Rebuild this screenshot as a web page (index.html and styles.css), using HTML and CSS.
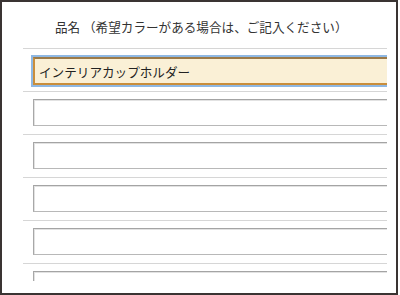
FILE: index.html
```html
<!DOCTYPE html>
<html lang="ja">
<head>
<meta charset="utf-8">
<title>品名</title>
<link rel="stylesheet" href="styles.css">
</head>
<body>
<div class="frame">
  <div class="viewport">
    <div class="title">品名 （希望カラーがある場合は、ご記入ください）</div>
    <div class="row"><input class="field focused" type="text" value="インテリアカップホルダー"></div>
    <div class="row"><input class="field" type="text"></div>
    <div class="row"><input class="field" type="text"></div>
    <div class="row"><input class="field" type="text"></div>
    <div class="row"><input class="field" type="text"></div>
    <div class="row"><input class="field" type="text"></div>
  </div>
</div>
</body>
</html>
```
FILE: styles.css
```css
html, body {
  margin: 0;
  padding: 0;
  background: #ffffff;
}
body {
  width: 400px;
  height: 295px;
  font-family: "Noto Sans CJK JP", "Noto Sans", sans-serif;
  color: #333333;
}
.frame {
  box-sizing: border-box;
  width: 398px;
  height: 295px;
  border: 2px solid #3a3433;
}
.viewport {
  margin-left: 21px;
  width: 364px;
  height: 279px;
  overflow: hidden;
}
.title {
  box-sizing: border-box;
  height: 46px;
  padding: 16px 0 0 32px;
  font-size: 12.6px;
  line-height: 18px;
  white-space: nowrap;
  color: #333333;
}
.row {
  border-top: 1px solid #d6d6d6;
  padding: 7px 0 8px 10px;
  height: 27px;
}
.field {
  display: block;
  box-sizing: border-box;
  width: 380px;
  height: 27px;
  margin: 0;
  padding: 0 4px;
  border: 1px solid #b8b8b8;
  border-top-color: #a4a4a4;
  border-left-color: #a8a8a8;
  box-shadow: inset 1px 1px 0 #e2e2e2;
  background: #ffffff;
  font-family: "Noto Sans CJK JP", "Noto Sans", sans-serif;
  font-size: 12.6px;
  color: #222222;
  outline: none;
}
.focused {
  height: 28px;
  margin-top: 1px;
  border: 2px solid #c98e3c;
  border-top-color: #9c7a48;
  background: #faf0d6;
  box-shadow: 0 0 0 2px #8fb8e3;
  padding-left: 4px;
}
```
